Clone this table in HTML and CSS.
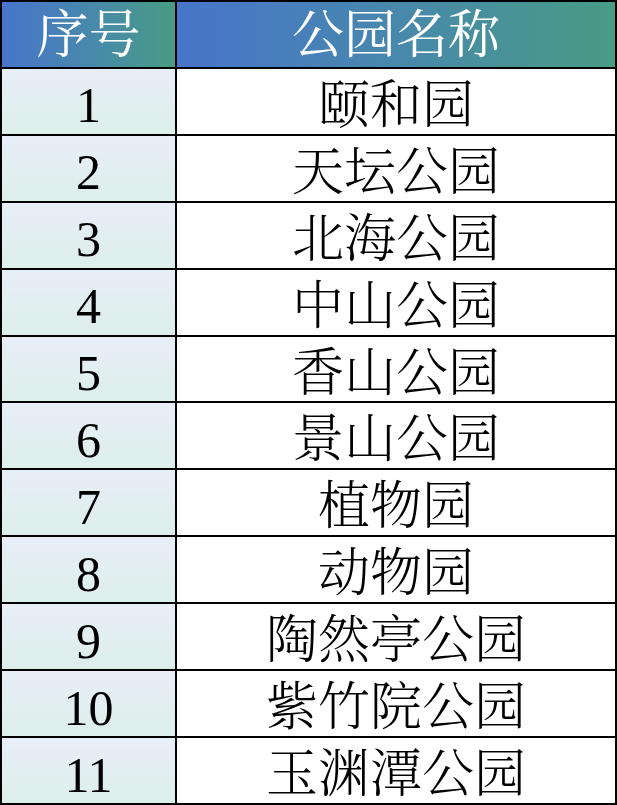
FILE: index.html
```html
<!DOCTYPE html>
<html lang="zh-CN">
<head>
<meta charset="utf-8">
<title>公园名称</title>
<link rel="stylesheet" href="styles.css">
</head>
<body>
<div class="sheet">
  <div class="cell head">序号</div><div class="cell head">公园名称</div>
  <div class="cell num">1</div><div class="cell name">颐和园</div>
  <div class="cell num">2</div><div class="cell name">天坛公园</div>
  <div class="cell num">3</div><div class="cell name">北海公园</div>
  <div class="cell num">4</div><div class="cell name">中山公园</div>
  <div class="cell num">5</div><div class="cell name">香山公园</div>
  <div class="cell num">6</div><div class="cell name">景山公园</div>
  <div class="cell num">7</div><div class="cell name">植物园</div>
  <div class="cell num">8</div><div class="cell name">动物园</div>
  <div class="cell num">9</div><div class="cell name">陶然亭公园</div>
  <div class="cell num">10</div><div class="cell name">紫竹院公园</div>
  <div class="cell num">11</div><div class="cell name">玉渊潭公园</div>
</div>
</body>
</html>
```
FILE: styles.css
```css
html, body {
  margin: 0;
  padding: 0;
  background: #ffffff;
}
.sheet {
  box-sizing: border-box;
  width: 617px;
  height: 805px;
  display: grid;
  grid-template-columns: 173px 1fr;
  grid-template-rows: repeat(12, 1fr);
  gap: 2px;
  padding: 2px;
  background: #000000;
}
.cell {
  display: flex;
  align-items: center;
  justify-content: center;
  font-size: 52px;
  line-height: 1;
  color: #000000;
  font-family: "Liberation Serif", "Noto Serif CJK SC", "Noto Sans CJK SC", serif;
}
.head {
  color: #ffffff;
  background: linear-gradient(90deg, #4775cb 0%, #4888ac 50%, #489c84 100%);
  font-size: 52px;
  font-weight: 400;
  padding-top: 4px;
}
.num {
  background: linear-gradient(180deg, #e8eef8 0%, #dcefe9 100%);
  font-size: 50px;
  padding-top: 8px;
}
.name {
  background: #ffffff;
  font-weight: 300;
  padding-top: 9px;
}
```
